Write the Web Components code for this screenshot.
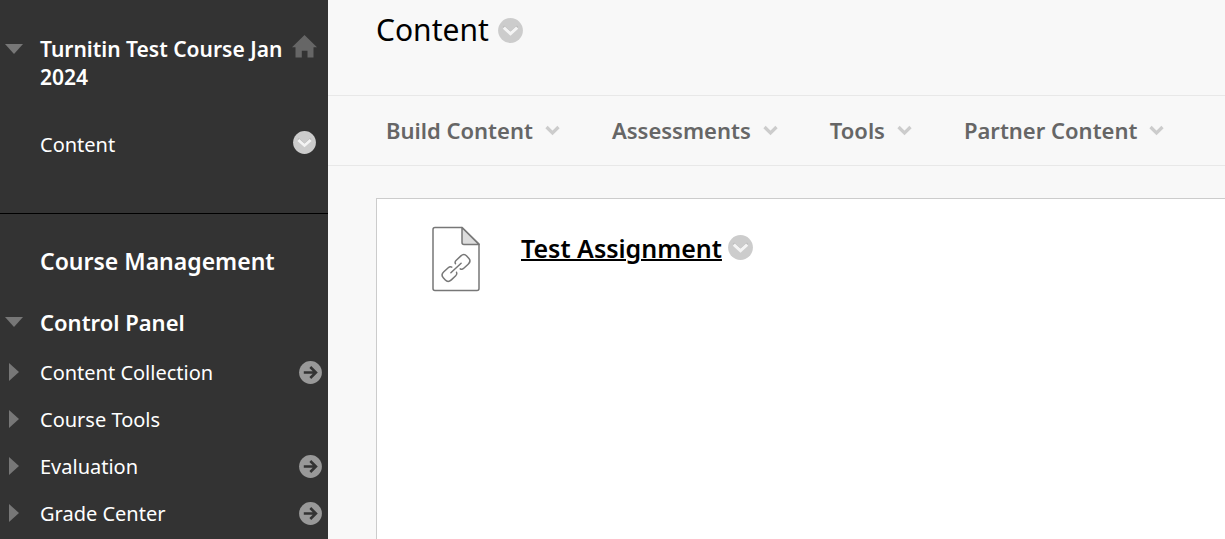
<!DOCTYPE html>
<html lang="en">
<head>
<meta charset="utf-8">
<meta name="viewport" content="width=device-width, initial-scale=1">
<title>Content</title>
<style>
  body {
    margin: 0;
    font-family: "Noto Sans", "Open Sans", sans-serif;
    background: #f8f8f8;
    color: #000;
  }
</style>
</head>
<body>
<course-page>
  <course-sidebar slot="sidebar">
    <sidebar-title slot="course">Turnitin Test Course Jan 2024</sidebar-title>
    <sidebar-link slot="course" action="menu">Content</sidebar-link>
    <sidebar-heading>Course Management</sidebar-heading>
    <sidebar-heading expanded>Control Panel</sidebar-heading>
    <sidebar-link expandable action="open">Content Collection</sidebar-link>
    <sidebar-link expandable>Course Tools</sidebar-link>
    <sidebar-link expandable action="open">Evaluation</sidebar-link>
    <sidebar-link expandable action="open">Grade Center</sidebar-link>
  </course-sidebar>
  <page-header slot="header">Content</page-header>
  <action-bar slot="actions">
    <action-menu>Build Content</action-menu>
    <action-menu>Assessments</action-menu>
    <action-menu>Tools</action-menu>
    <action-menu>Partner Content</action-menu>
  </action-bar>
  <content-item>Test Assignment</content-item>
</course-page>

<script>
const define = (name, html) => {
  customElements.define(name, class extends HTMLElement {
    constructor() {
      super();
      const shadow = this.attachShadow({ mode: "open" });
      shadow.innerHTML = typeof html === "function" ? html(this) : html;
    }
  });
};

const buttonReset = `
  button {
    display: flex;
    align-items: center;
    margin: 0;
    padding: 0;
    border: 0;
    background: none;
    font: inherit;
    color: inherit;
    cursor: pointer;
  }
  svg { display: block; }
`;

const arrowDown = `<svg width="18" height="10" viewBox="0 0 18 10"><path d="M0 0h18L9 10z" fill="#777"/></svg>`;
const arrowRight = `<svg width="10" height="18" viewBox="0 0 10 18"><path d="M0 0l10 9-10 9z" fill="#777"/></svg>`;

define("menu-button", (el) => `
  <style>
    :host { display: block; flex: none; }
    ${buttonReset}
  </style>
  <button type="button" aria-label="${el.getAttribute("label") || "Options"}">
    <svg width="${el.getAttribute("size") || 25}" height="${el.getAttribute("size") || 25}" viewBox="0 0 25 25">
      <circle cx="12.5" cy="12.5" r="12.4" fill="#ccc"/>
      <path d="M5.5 8.2l7 6.3 7-6.3" fill="none" stroke="#bbb" stroke-width="2"/>
      <path d="M5.8 9.7l6.7 6 6.7-6" fill="none" stroke="#f4f4f4" stroke-width="3"/>
    </svg>
  </button>
`);

define("course-page", `
  <style>
    :host {
      display: grid;
      grid-template-columns: 328px minmax(0, 1fr);
      min-height: 100vh;
    }
    main { display: flex; flex-direction: column; }
    section {
      flex: 1;
      margin: 32px 0 0 48px;
      border: 1px solid #ccc;
      border-width: 1px 0 0 1px;
      background: #fff;
    }
  </style>
  <slot name="sidebar"></slot>
  <main>
    <slot name="header"></slot>
    <slot name="actions"></slot>
    <section><slot></slot></section>
  </main>
`);

define("course-sidebar", `
  <style>
    :host { display: block; background: #333; color: #fff; }
    .course {
      display: flex;
      flex-direction: column;
      gap: 30px;
      padding: 35px 0 45px;
      border-bottom: 1px solid #000;
    }
    .panel { padding-top: 17px; }
  </style>
  <div class="course"><slot name="course"></slot></div>
  <nav class="panel"><slot></slot></nav>
`);

define("sidebar-title", `
  <style>
    :host {
      display: grid;
      grid-template-columns: 40px 1fr 36px;
      font-size: 21px;
      line-height: 28px;
      font-weight: 600;
    }
    ${buttonReset}
    h2 { margin: 0; font: inherit; }
    button { align-self: start; height: 28px; padding-left: 5px; }
  </style>
  <button type="button" aria-label="Collapse course menu">${arrowDown}</button>
  <h2><slot></slot></h2>
  <a href="#" aria-label="Course home">
    <svg width="25" height="23" viewBox="0 0 25 23"><path d="M12.5 0L25 12.3h-3.5v10.2h-6v-6.7H9.8v6.7H3.5V12.3H0z" fill="#666"/></svg>
  </a>
`);

define("sidebar-heading", (el) => `
  <style>
    :host {
      display: grid;
      grid-template-columns: 40px 1fr;
      align-items: center;
      box-sizing: border-box;
      height: 60px;
      font-size: 23px;
      font-weight: 600;
    }
    :host([expanded]) { height: 58px; padding-top: 4px; font-size: 22px; }
    ${buttonReset}
    button { padding-left: 5px; }
    h3 { grid-column: 2; margin: 0; font: inherit; }
  </style>
  ${el.hasAttribute("expanded") ? `<button type="button" aria-label="Collapse">${arrowDown}</button>` : ""}
  <h3><slot></slot></h3>
`);

define("sidebar-link", (el) => {
  const action = el.getAttribute("action");
  return `
  <style>
    :host {
      display: grid;
      grid-template-columns: 40px 1fr auto;
      align-items: center;
      height: 47px;
      font-size: 20px;
    }
    ${buttonReset}
    button { padding: 0 0 2px 9px; }
    .name { grid-column: 2; color: inherit; text-decoration: none; }
    .open { padding-right: 6px; }
    menu-button { padding: 0 12px 4px 0; }
  </style>
  ${el.hasAttribute("expandable") ? `<button type="button" aria-label="Expand">${arrowRight}</button>` : ""}
  <a class="name" href="#"><slot></slot></a>
  ${action === "menu" ? `<menu-button size="23"></menu-button>` : ""}
  ${action === "open" ? `
    <a class="open" href="#" aria-label="Open">
      <svg width="23" height="23" viewBox="0 0 23 23">
        <circle cx="11.5" cy="11.5" r="11.4" fill="#999"/>
        <path d="M4.8 11.5h12M11.3 6l5.6 5.5-5.6 5.5" fill="none" stroke="#333" stroke-width="2.6"/>
      </svg>
    </a>` : ""}
`;
});

define("page-header", `
  <style>
    :host {
      display: flex;
      align-items: center;
      gap: 9px;
      box-sizing: border-box;
      height: 95px;
      padding: 0 48px 35px;
    }
    h1 { margin: 0; font-size: 30px; font-weight: 400; line-height: 40px; }
  </style>
  <h1><slot></slot></h1>
  <menu-button label="Page options"></menu-button>
`);

define("action-bar", `
  <style>
    :host {
      display: flex;
      align-items: center;
      gap: 52px;
      box-sizing: border-box;
      height: 71px;
      padding: 0 0 2px 58px;
      border: 1px solid #e8e8e8;
      border-width: 1px 0;
    }
  </style>
  <slot></slot>
`);

define("action-menu", `
  <style>
    :host {
      display: block;
      color: #666;
      font-size: 22px;
      font-weight: 600;
      white-space: nowrap;
    }
    ${buttonReset}
    button { gap: 12px; }
    svg { padding-top: 2px; }
  </style>
  <button type="button">
    <slot></slot>
    <svg width="15" height="11" viewBox="0 0 15 11"><path d="M1.5 2l6 6 6-6" fill="none" stroke="#ccc" stroke-width="3.2"/></svg>
  </button>
`);

define("content-item", `
  <style>
    :host { display: flex; gap: 41px; padding: 27px 55px; }
    .title { display: flex; align-items: center; gap: 6px; height: 44px; }
    h2 { margin: 0; font-size: 25px; font-weight: 600; }
    a { color: #000; text-decoration-thickness: 2px; }
    svg { display: block; flex: none; }
    menu-button { padding-bottom: 2px; }
  </style>
  <svg width="48" height="66" viewBox="0 0 48 66" fill="none" stroke="#777" stroke-width="1.5" stroke-linejoin="round">
    <path d="M30 1.5H3q-2 0-2 2v59q0 2 2 2h42q2 0 2-2V18z" fill="#fff"/>
    <path d="M30 1.5v15q0 2 2 2h15z" fill="#ddd"/>
    <g transform="translate(24 42) rotate(-43)" stroke-linecap="round">
      <path d="M-7 0H7"/>
      <path d="M-2.5-3.5Q-3-5.5-5.5-5.5h-6q-4.5 0-4.5 4v3q0 4 4.5 4h6Q-3 5.5-2.5 3.5"/>
      <path d="M2.5-3.5Q3-5.5 5.5-5.5h6q4.5 0 4.5 4v3q0 4-4.5 4h-6Q3 5.5 2.5 3.5"/>
    </g>
  </svg>
  <div class="title">
    <h2><a href="#"><slot></slot></a></h2>
    <menu-button label="Item options"></menu-button>
  </div>
`);
</script>
</body>
</html>
